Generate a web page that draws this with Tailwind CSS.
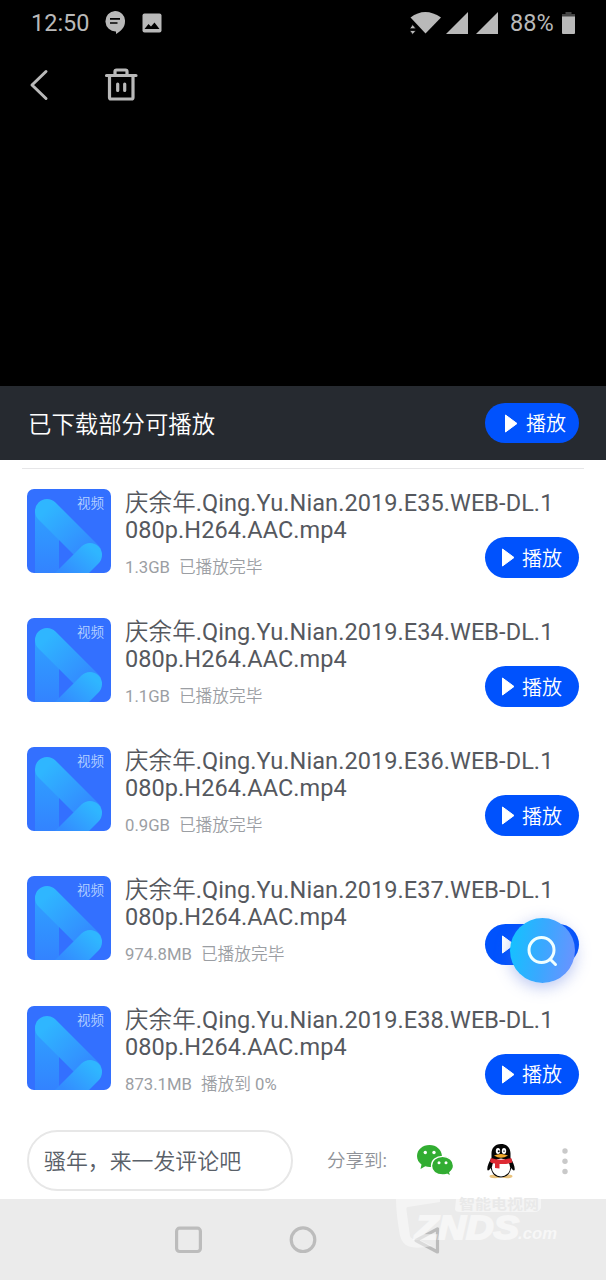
<!DOCTYPE html>
<html lang="zh-CN">
<head>
<meta charset="utf-8">
<title>已下载部分可播放</title>
<script src="https://cdn.jsdelivr.net/npm/@tailwindcss/browser@4"></script>
</head>
<body class="bg-white">
<svg class="absolute w-0 h-0" aria-hidden="true">
  <defs>
    <linearGradient id="stem" x1="0" y1="0" x2="0" y2="1"><stop offset="0" stop-color="#2fa0ff"/><stop offset="1" stop-color="#3383ff"/></linearGradient>
    <linearGradient id="diag" gradientUnits="userSpaceOnUse" x1="20" y1="20" x2="56" y2="60"><stop offset="0" stop-color="#2fb6ff"/><stop offset="1" stop-color="#338cff"/></linearGradient>
    <linearGradient id="foot" gradientUnits="userSpaceOnUse" x1="66" y1="60" x2="42" y2="88"><stop offset="0" stop-color="#2fb6ff"/><stop offset="1" stop-color="#338cff"/></linearGradient>
    <symbol id="thumb" viewBox="0 0 84 84">
      <rect width="84" height="84" fill="#3370ff"/>
      <path d="M8 22h24v62H8z" fill="url(#stem)"/>
      <path d="M20 22L62.500 64.500" stroke="url(#diag)" stroke-width="24" stroke-linecap="round"/>
      <path d="M63 66L30 99" stroke="url(#foot)" stroke-width="24" stroke-linecap="round"/>
    </symbol>
    <symbol id="tri" viewBox="0 0 13 19"><path d="M.5 1L12 9.500L.5 18z" fill="#fff" stroke="#fff" stroke-linejoin="round"/></symbol>
  </defs>
</svg>
<main class="relative flex h-[1280px] w-[606px] flex-col overflow-hidden bg-white font-[Roboto,'Noto_Sans_CJK_SC',sans-serif]">
  <header class="h-[386px] shrink-0 bg-black text-[#b9b9b9]">
    <div class="flex h-[46px] items-center pl-[31px]">
      <span class="w-[74px] pt-[2px] text-[23.500px] leading-none">12:50</span>
      <svg class="h-[24px] w-[20px]" viewBox="0 0 20 24" fill="currentColor"><path d="M10 0a10 10 0 0 1 10 10.500c0 6-4.500 10-9 12.500V20.500A10 10.200 0 0 1 10 0z"/><path d="M5 7.800h10M5 12h7.500" stroke="#000" stroke-width="1.700"/></svg>
      <svg class="ml-[17px] h-[20px] w-[20px]" viewBox="0 0 20 20"><rect x=".5" y=".5" width="19" height="19" rx="2" fill="currentColor"/><path d="M2.500 16L6.500 11L9 13.500L12.500 9.500L17.500 16z" fill="#000"/></svg>
      <svg class="ml-[248px] h-[24px] w-[88px]" viewBox="0 0 88 24" fill="currentColor"><path d="M0.500 6.500Q15 -4.500 31 6.500L15.500 22.500z"/><path d="M-.5 17.800L2.700 13.500L6 17.800zM-.5 19.500L2.700 23.500L6 19.500z" stroke="#000" stroke-width=".8"/><path d="M36 23L58 1v22zM66 23L88 1v22z"/></svg>
      <span class="ml-[12px] w-[50px] pt-[2px] text-[23.500px] leading-none">88%</span>
      <svg class="ml-[2px] h-[22px] w-[13px]" viewBox="0 0 13 22"><path d="M3.500 0h6v2H13v3H0V2h3.500z" fill="#444"/><path d="M0 4.500h13V21a1 1 0 0 1-1 1H1a1 1 0 0 1-1-1z" fill="currentColor"/></svg>
    </div>
    <div class="flex h-[78px] items-center pl-[29px]">
      <svg class="h-[32px] w-[20px]" viewBox="0 0 20 32" fill="none" stroke="currentColor" stroke-width="3"><path d="M17 2.500L3 16L17 29.500" stroke-linecap="round" stroke-linejoin="round"/></svg>
      <svg class="mb-[2px] ml-[55px] h-[34px] w-[34px]" viewBox="0 0 34 34" fill="none" stroke="currentColor" stroke-width="3.200" stroke-linecap="round" stroke-linejoin="round"><path d="M2.500 8.500H32M5.500 8.500V30.500a1.500 1.500 0 0 0 1.500 1.500H27.500a1.500 1.500 0 0 0 1.500-1.500V8.500M11 7.500V4.500a1.500 1.500 0 0 1 1.500-1.500H21.500a1.500 1.500 0 0 1 1.500 1.500V7.500M13.700 17V23.500M20.700 17V23.500"/></svg>
    </div>
  </header>

  <section class="flex h-[74px] shrink-0 items-center justify-between bg-[#262a30] pl-[28px] pr-[27px]">
    <h1 class="pt-[3px] text-[23.400px] font-[350] leading-[30px] text-white">已下载部分可播放</h1>
    <button class="flex h-[40px] w-[94px] items-center rounded-full bg-[#0052fd] pl-[20px] text-[20px] font-[350] leading-none text-white"><svg class="mr-[8px] h-[19px] w-[13px]"><use href="#tri"/></svg><span class="pt-[2px]">播放</span></button>
  </section>

  <section class="h-[650px] shrink-0 pt-[8px]">
    <hr class="mx-[22px] border-t border-[#e6e6e8]">
    <ul id="list" class="pt-[20px]"></ul>
  </section>

  <section class="flex h-[89px] shrink-0 items-center pl-[27px] pt-[12px]">
    <div class="flex h-[61px] w-[266px] items-center rounded-full border-2 border-[#e7e7e7] pl-[15px] pt-[3px] text-[21.900px] font-[350] text-[#596068]">骚年，来一发评论吧</div>
    <span class="ml-[34px] w-[62px] whitespace-nowrap pt-[3px] text-[18.500px] font-[350] text-[#8f9298]">分享到<span class="font-normal">:</span></span>
    <svg class="ml-[27px] h-[33px] w-[38px]" viewBox="0 0 38 33">
      <path d="M13.500 1C6.500 1 1 5.700 1 12C1 15.700 2.800 18.500 5.500 20.500L4.500 25L9.300 22.300A15 15 0 0 0 16 22.800L26 12C25.500 5.700 20.500 1 13.500 1z" fill="#32ad32"/>
      <path d="M26.500 12.300C20.200 12.300 15.500 16.500 15.500 21.800C15.500 27.200 20.200 31 26.500 31C28 31 29.500 30.800 31 30.300L34.800 32.300L33.800 28.500C36.200 26.700 37.500 24.500 37.500 21.800C37.500 16.500 32.800 12.300 26.500 12.300z" fill="#32ad32" stroke="#fff" stroke-width="1.300"/>
      <circle cx="9.300" cy="8.500" r="1.700" fill="#fff"/><circle cx="18" cy="8.500" r="1.700" fill="#fff"/><circle cx="23" cy="18.700" r="1.500" fill="#fff"/><circle cx="30" cy="18.700" r="1.500" fill="#fff"/>
    </svg>
    <svg class="ml-[33px] h-[36px] w-[28px]" viewBox="0 0 28 36">
      <ellipse cx="8" cy="33.300" rx="5.500" ry="1.900" fill="#e9c27c"/><ellipse cx="20" cy="33.300" rx="5.500" ry="1.900" fill="#e9c27c"/>
      <path d="M14 1C7.500 1 4.500 5.500 4.500 10.500V15C2 19 0 23.500 .3 26.500C.6 28.500 2.500 27 3.800 25C5 31 8.500 34.500 14 34.500S23 31 24.200 25C25.500 27 27.400 28.500 27.700 26.500C28 23.500 26 19 23.500 15V10.500C23.500 5.500 20.500 1 14 1z" fill="#050505"/>
      <ellipse cx="14" cy="24.500" rx="9.200" ry="9" fill="#fff"/>
      <ellipse cx="11" cy="8" rx="2.200" ry="3" fill="#fff"/><ellipse cx="17" cy="8" rx="2.200" ry="3" fill="#fff"/><circle cx="11.700" cy="8.200" r="1" fill="#000"/><path d="M16 8.500q1-1.500 2 0" fill="none" stroke="#000" stroke-width=".8"/>
      <path d="M3.800 15Q14 18.300 24.200 15L25.500 19.500Q19 21.500 12.500 21V25.500L8 25V20.500Q5 20.500 3 19z" fill="#dd2a33"/>
      <path d="M7 12.600Q14 9.500 21 12.600Q14 17 7 12.600z" fill="#f0a92a"/>
    </svg>
    <svg class="ml-[46px] h-[28px] w-[8px]" viewBox="0 0 8 28" fill="#c9c9c9"><circle cx="4" cy="4" r="2.700"/><circle cx="4" cy="14.300" r="2.700"/><circle cx="4" cy="24.500" r="2.700"/></svg>
  </section>

  <nav class="flex h-[81px] shrink-0 items-center bg-[#ebebeb] pl-[174px]">
    <svg class="h-[28px] w-[28px]" viewBox="0 0 28 28" fill="none" stroke="#bcbcbc" stroke-width="3.200"><rect x="2.600" y="2.200" width="23.800" height="23.300" rx="3"/></svg>
    <svg class="ml-[87px] h-[28px] w-[28px]" viewBox="0 0 28 28" fill="none" stroke="#bcbcbc" stroke-width="3.200"><circle cx="14" cy="13.700" r="11.800"/></svg>
    <svg class="ml-[96px] h-[28px] w-[28px]" viewBox="0 0 28 28" fill="none" stroke="#bcbcbc" stroke-width="3.200" stroke-linejoin="round"><path d="M3 14.500L24.500 2.800V26z"/></svg>
  </nav>

  <!-- watermark -->
  <svg class="absolute left-[390px] top-[1190px] h-[65px] w-[180px]" viewBox="0 0 180 65" font-family="'Liberation Sans','Noto Sans CJK SC',sans-serif" font-weight="bold">
    <path d="M6 9H50V12L18 17Q16 17 16.500 20L20 46Q21 50 30 50L42 56Q24 60 16 55Q10 51 9 40Q6 22 6 9z" fill="#fff" opacity=".45"/>
    <path d="M66 9H151V18Q149 22 145 22H70Q65 22 65 19z" fill="#fff" opacity=".5"/>
    <text x="69" y="19" font-size="14" textLength="80" lengthAdjust="spacingAndGlyphs" fill="#e9e9e9">智能电视网</text>
    <text x="25" y="49" font-size="33" font-style="italic" textLength="104" lengthAdjust="spacingAndGlyphs" fill="#fff" stroke="#fff" stroke-width="2" opacity=".55">ZNDS</text>
    <text x="128" y="49" font-size="17" font-style="italic" textLength="39" lengthAdjust="spacingAndGlyphs" fill="#fff" opacity=".6">.com</text>
  </svg>

  <!-- floating search button -->
  <button class="absolute left-[510px] top-[918px] flex h-[65px] w-[65px] items-center justify-center rounded-full bg-[linear-gradient(100deg,#10c4ff,#3aa8ff_50%,#7090ff)] pr-[2px] shadow-[0_4px_16px_rgba(80,110,220,0.4)]">
    <svg class="h-[32px] w-[32px]" viewBox="0 0 32 32" fill="none" stroke="#f0ffff" stroke-width="3" stroke-linecap="round"><circle cx="15.500" cy="15" r="12.500"/><path d="M24.500 24.500L29.500 29.500"/></svg>
  </button>
</main>
<script>
  const items = [
    ['E35', '1.3GB', '已播放完毕', ''],
    ['E34', '1.1GB', '已播放完毕', ''],
    ['E36', '0.9GB', '已播放完毕', ''],
    ['E37', '974.8MB', '已播放完毕', ''],
    ['E38', '873.1MB', '播放到', ' 0%'],
  ];
  document.getElementById('list').innerHTML = items.map(([ep, size, state, progress]) => `
    <li class="flex h-[129.150px] items-start pl-[27px] pr-[27px]">
      <div class="grid h-[84px] w-[84px] shrink-0 overflow-hidden rounded-[7px]">
        <svg class="col-start-1 row-start-1 h-[84px] w-[84px]"><use href="#thumb"/></svg>
        <span class="z-10 col-start-1 row-start-1 mr-[7px] mt-[6px] justify-self-end text-[13.500px] font-[350] leading-[16px] text-[#b5d2ff]">视频</span>
      </div>
      <div class="ml-[14px] w-[360px] shrink-0 whitespace-nowrap pt-[1px]">
        <p class="text-[23.500px] leading-[27px] tracking-[0.070px] text-[#55585e]"><span class="font-[350]">庆余年</span>.Qing.Yu.Nian.2019.${ep}.WEB-DL.1<br>080p.H264.AAC.mp4</p>
        <p class="mt-[12px] flex gap-[9px] text-[16.700px] leading-[24px] text-[#9b9ea3]"><span>${size}</span><span><span class="font-[350]">${state}</span>${progress}</span></p>
      </div>
      <button class="mt-[48px] flex h-[41px] w-[94px] shrink-0 items-center rounded-full bg-[#0052fd] pl-[17px] text-[20px] font-[350] leading-none text-white"><svg class="mr-[7px] h-[19px] w-[13px]"><use href="#tri"/></svg><span class="pt-[2px]">播放</span></button>
    </li>`).join('');
</script>
</body>
</html>
